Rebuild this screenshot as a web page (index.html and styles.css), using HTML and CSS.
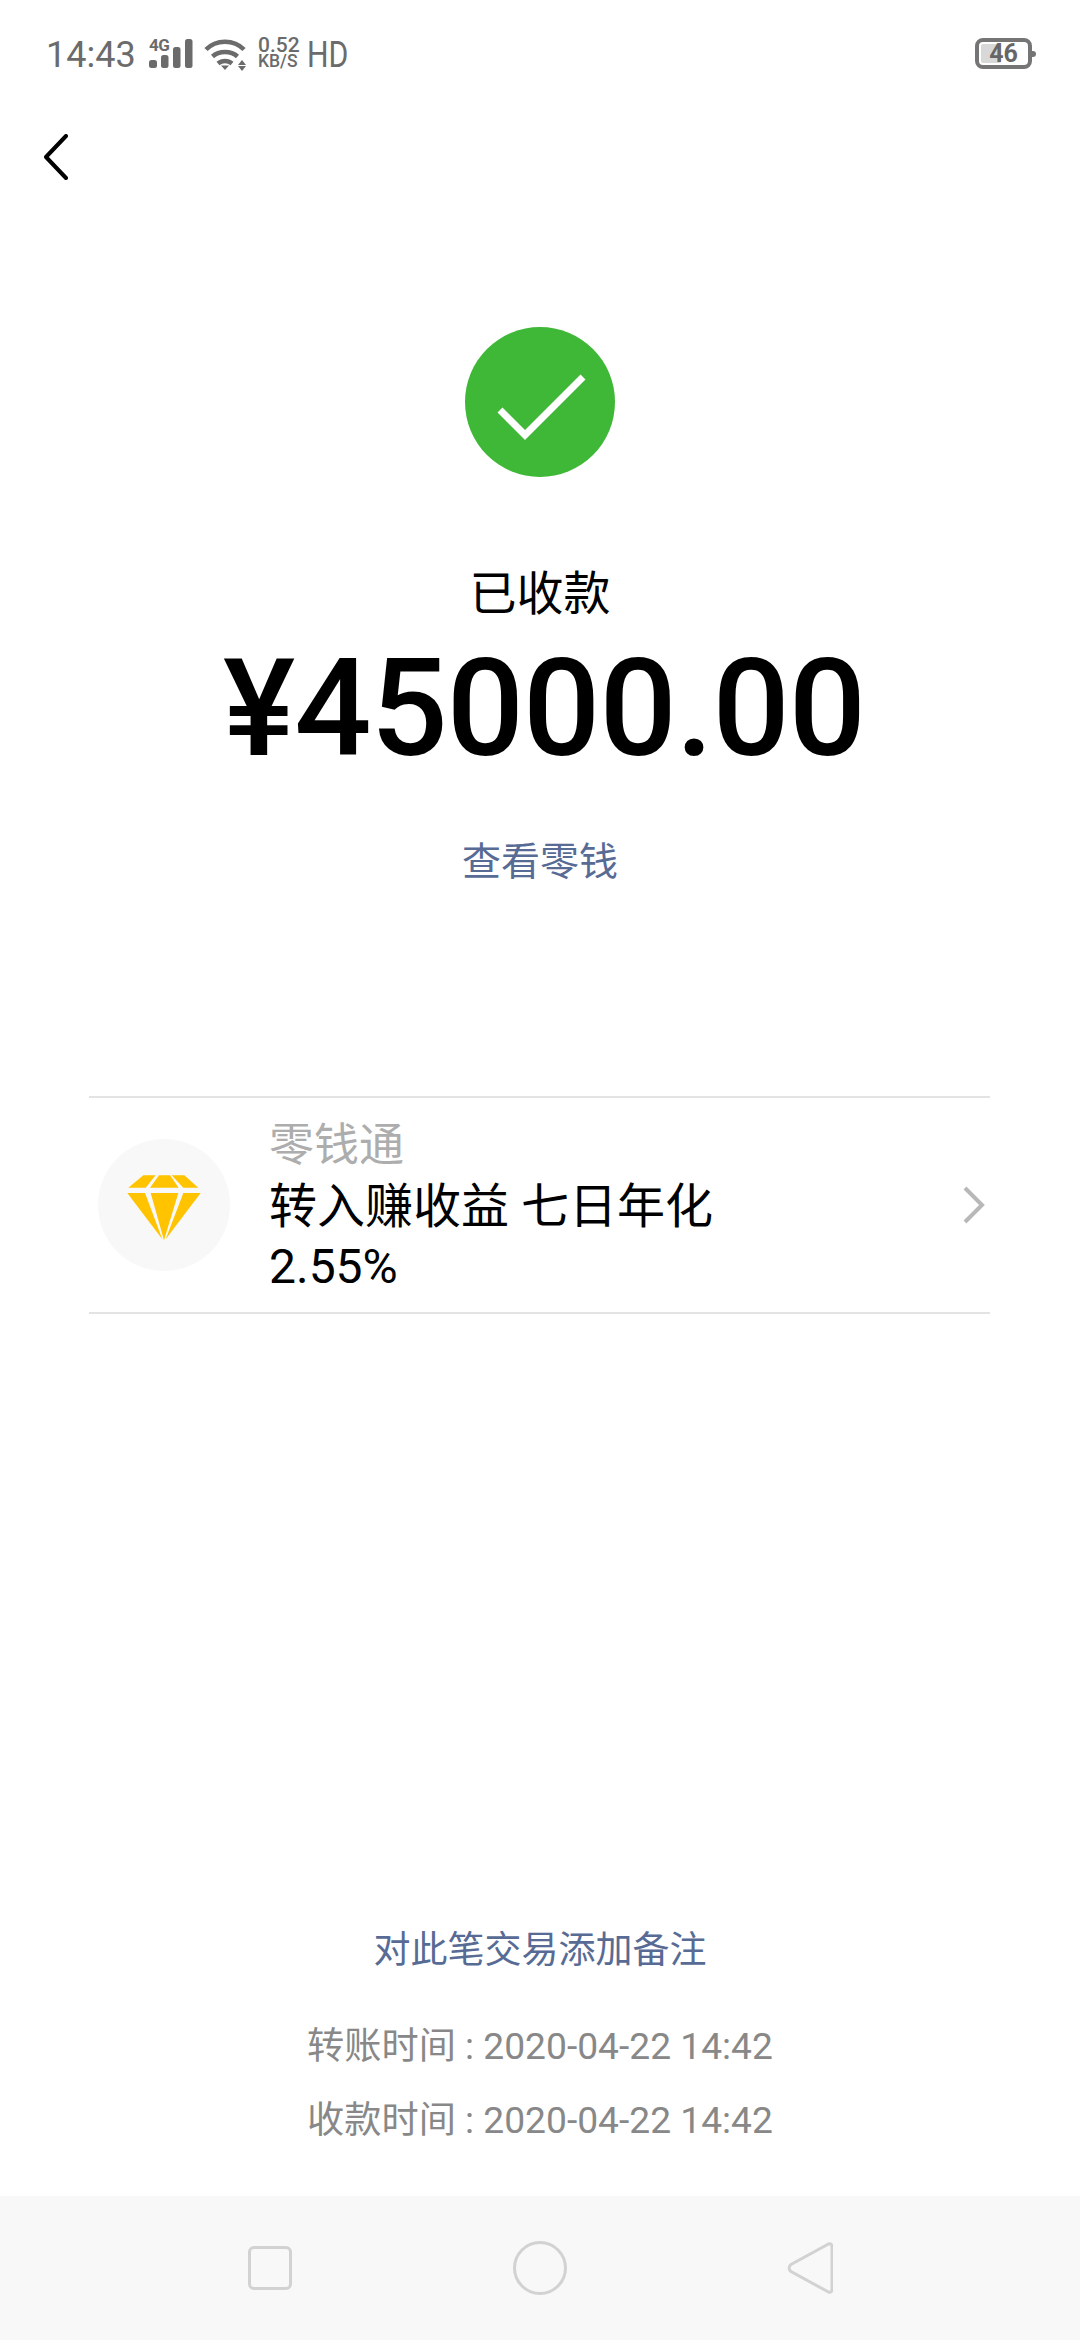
FILE: index.html
```html
<!DOCTYPE html>
<html lang="zh-CN">
<head>
<meta charset="utf-8">
<title>已收款</title>
<link rel="stylesheet" href="styles.css">
</head>
<body>
<div class="page">
  <header class="status">
    <div class="status-left">
      <span class="time">14:43</span>
      <span class="signal">
        <span class="net">4G</span>
        <svg class="bars" width="44" height="30" viewBox="0 0 44 30"><rect x="0" y="21" width="8" height="8" rx="2.500"/><rect x="12" y="16" width="7.500" height="13" rx="2.500"/><rect x="24" y="8" width="7.500" height="21" rx="2.500"/><rect x="36" y="0" width="7.500" height="29" rx="2.500"/></svg>
      </span>
      <svg class="wifi" width="44" height="34" viewBox="0 0 44 34"><g fill="none" stroke="#6b6b6b" stroke-width="4.500"><path d="M2 11.500C12 1 30 1 40 11.500"/><path d="M8.500 18.500C15 12.500 27 12.500 33.500 18.500"/><path d="M14 25.500C18 22 24 22 28 25.500"/></g><path d="M17 27.500h8l-4 4.500zM38 22l4 5h-8zM34 28h8l-4 5z" fill="#6b6b6b"/></svg>
      <span class="speed"><span class="speed-num">0.52</span><span class="speed-unit">KB/S</span></span>
      <span class="hd">HD</span>
    </div>
    <div class="battery">
      <span class="battery-fill"></span>
      <span class="battery-num">46</span>
      <span class="battery-nub"></span>
    </div>
  </header>

  <div class="back">
    <svg width="24" height="46" viewBox="0 0 24 46"><path d="M22 2 2 23l20 21" fill="none" stroke="#000" stroke-width="4" stroke-linecap="round" stroke-linejoin="round"/></svg>
  </div>

  <main class="result">
    <div class="check">
      <svg width="150" height="150" viewBox="0 0 150 150"><path d="M35 83 60 108 118 50" fill="none" stroke="#fff" stroke-width="7"/></svg>
    </div>
    <div class="title">已收款</div>
    <div class="amount">¥45000.00</div>
    <div class="link change">查看零钱</div>
  </main>

  <section class="promo">
    <div class="promo-icon">
      <svg width="132" height="132" viewBox="24 54 396 396">
        <g fill="#ffc300">
          <path d="M115 200 160 163H197L167 200Z"/>
          <path d="M180 200 207 163H240L266 200Z"/>
          <path d="M245 163H283L325 200H280Z"/>
          <path d="M112 216H165L217 355Z"/>
          <path d="M182 216H265L222 358Z"/>
          <path d="M280 216H332L227 355Z"/>
        </g>
      </svg>
    </div>
    <div class="promo-text">
      <div class="promo-name">零钱通</div>
      <div class="promo-desc">转入赚收益 七日年化 2.55%</div>
    </div>
    <svg class="chevron" width="24" height="38" viewBox="0 0 24 38"><path d="M3 2 20 19 3 36" fill="none" stroke="#b8b8b8" stroke-width="4"/></svg>
  </section>

  <footer class="foot">
    <div class="link note">对此笔交易添加备注</div>
    <div class="times">
      <div class="time-row">转账时间 : 2020-04-22 14:42</div>
      <div class="time-row">收款时间 : 2020-04-22 14:42</div>
    </div>
  </footer>

  <nav class="navbar">
    <span class="nav-square"></span>
    <span class="nav-circle"></span>
    <svg class="nav-back" width="46" height="54" viewBox="0 0 46 54"><path d="M40.500 3.500c2-1.500 4.500-.5 4.500 2v43c0 2.500-2.500 3.500-4.500 2L4 30.500c-2.500-2-2.500-5 0-7z" fill="none" stroke="#d2d2d2" stroke-width="3"/></svg>
  </nav>
</div>
</body>
</html>
```
FILE: styles.css
```css
* { box-sizing: border-box; }
html, body { margin: 0; padding: 0; background: #fff; }
body { font-family: Roboto, "Noto Sans CJK SC", sans-serif; color: #000; }
.page { width: 1080px; height: 2340px; display: flex; flex-direction: column; overflow: hidden; }

.status { height: 72px; padding: 39px 48px 0 46px; display: flex; justify-content: space-between; align-items: flex-start; color: #6b6b6b; flex: none; }
.status-left { display: flex; align-items: flex-start; }
.time { font-size: 36px; line-height: 32px; font-weight: 400; width: 103px; }
.signal { position: relative; width: 44px; height: 30px; display: block; }
.bars { display: block; fill: #6b6b6b; }
.net { position: absolute; left: 0; top: -1px; font-size: 17px; line-height: 14px; font-weight: 700; letter-spacing: -.5px; }
.wifi { margin-left: 11px; margin-top: -1px; }
.speed { display: flex; flex-direction: column; margin-left: 10px; width: 49px; margin-top: -2px; }
.speed-num { font-size: 21px; line-height: 17px; font-weight: 500; }
.speed-unit { font-size: 17.500px; line-height: 15px; font-weight: 500; }
.hd { font-size: 36px; line-height: 32px; font-weight: 400; transform: scaleX(.84); transform-origin: left center; }

.battery { position: relative; width: 57px; height: 31px; border: 4px solid #757575; border-radius: 8px; margin-top: -1px; }
.battery-fill { position: absolute; left: 2px; top: 2px; width: 20px; height: 19px; background: #d8d8d8; border-radius: 2px; }
.battery-num { position: absolute; left: 0; right: 0; top: 0; text-align: center; font-size: 25px; line-height: 23px; font-weight: 700; color: #666; }
.battery-nub { position: absolute; right: -8px; top: 9px; width: 4px; height: 6px; background: #757575; border-radius: 0 3px 3px 0; }

.back { padding: 62px 0 0 44px; height: 108px; flex: none; }
.back svg { display: block; }

.result { margin-top: 147px; display: flex; flex-direction: column; align-items: center; flex: none; }
.check { width: 150px; height: 150px; border-radius: 50%; background: #3fb838; }
.check svg { display: block; }
.title { margin-top: 87px; font-size: 47px; line-height: 60px; }
.amount { margin-top: 15px; font-size: 136px; line-height: 140px; font-weight: 500; letter-spacing: -1px; padding-left: 8px; }
.link { color: #576b95; }
.change { margin-top: 58px; font-size: 39px; line-height: 50px; }

.promo { margin: 209px 90px 0 89px; height: 218px; border-top: 2px solid #e3e3e3; border-bottom: 2px solid #e3e3e3; display: flex; align-items: center; flex: none; position: relative; }
.promo-icon { width: 132px; height: 132px; margin-left: 9px; border-radius: 50%; background: #f8f8f8; flex: none; }
.promo-icon svg { display: block; }
.promo-text { width: 500px; margin-left: 39px; flex: none; line-height: 60px; font-size: 48px; }
.promo-name { color: #adadad; font-size: 45px; line-height: 63px; }
.chevron { margin-left: auto; margin-right: 4px; }

.foot { margin-top: auto; text-align: center; padding-bottom: 39px; flex: none; }
.note { font-size: 37px; line-height: 50px; }
.times { margin-top: 33px; color: #888; font-size: 37.200px; line-height: 74px; }

.navbar { height: 144px; background: #f8f8f8; position: relative; display: flex; align-items: center; flex: none; padding: 0 247px 0 248px; justify-content: space-between; }
.nav-square { width: 44px; height: 44px; border: 3px solid #d2d2d2; border-radius: 6px; }
.nav-circle { width: 54px; height: 54px; border: 3px solid #d2d2d2; border-radius: 50%; }
.nav-back { display: block; }
```
